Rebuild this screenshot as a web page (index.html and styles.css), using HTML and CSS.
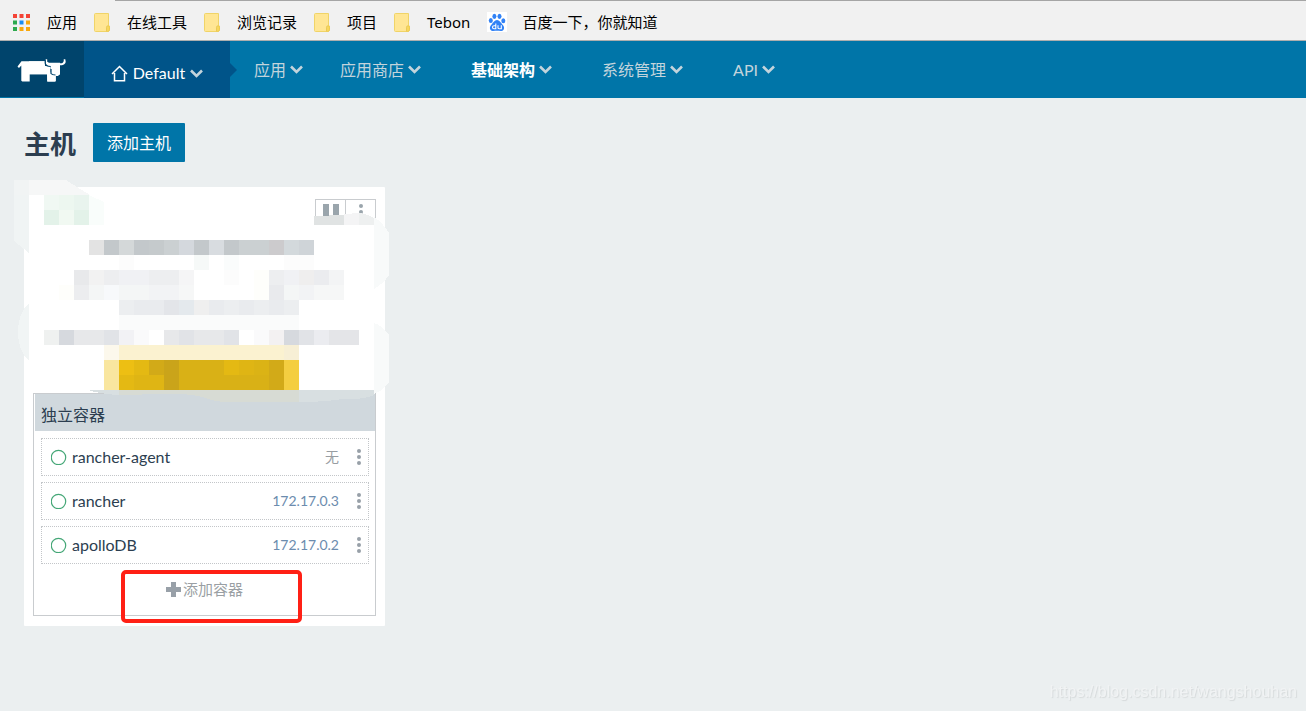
FILE: index.html
```html
<!DOCTYPE html>
<html lang="zh-CN">
<head>
<meta charset="utf-8">
<meta name="viewport" content="width=device-width, initial-scale=1">
<title>主机</title>
<link rel="stylesheet" href="styles.css">
</head>
<body>
<svg class="defs" width="0" height="0" aria-hidden="true">
  <symbol id="folder" viewBox="0 0 16 19"><path d="M1.500 .5h13v12.500h1v3.500a2 2 0 0 1-2 2h-12a1 1 0 0 1-1-1v-16a1 1 0 0 1 1-1z" fill="#ffe694" stroke="#f0d468"/><path d="M12.500 18.300v-4a1.500 1.500 0 0 1 3 0v2a2 2 0 0 1-3 2z" fill="#f9d75c" stroke="#e9ca58"/></symbol>
  <symbol id="chevron" viewBox="0 0 13 9"><path d="M1 1.500l5.500 5.500L12 1.500" fill="none" stroke="currentColor" stroke-width="2.600"/></symbol>
  <symbol id="dots" viewBox="0 0 4 16"><circle cx="2" cy="2" r="2"/><circle cx="2" cy="8" r="2"/><circle cx="2" cy="14" r="2"/></symbol>
  <symbol id="ring" viewBox="0 0 16 16"><circle cx="7.500" cy="8.500" r="7.200" fill="none" stroke="#45a777" stroke-width="1.200"/></symbol>
</svg>

<nav class="bookmarks" aria-label="书签">
  <a class="bookmark" href="#"><svg class="apps-icon" viewBox="0 0 17 17" aria-hidden="true"><g fill="#f44336"><path d="M0 0h4v4H0zM6.500 0h4v4h-4zM13 0h4v4h-4z"/></g><path d="M0 6.500h4v4H0zM0 13h4v4H0z" fill="#2da94f"/><path d="M6.500 6.500h4v4h-4z" fill="#1a8cf0"/><path d="M13 6.500h4v4h-4zM6.500 13h4v4h-4zM13 13h4v4h-4z" fill="#f9a80c"/></svg>应用</a>
  <a class="bookmark" href="#"><svg class="folder-icon" aria-hidden="true"><use href="#folder"/></svg>在线工具</a>
  <a class="bookmark" href="#"><svg class="folder-icon" aria-hidden="true"><use href="#folder"/></svg>浏览记录</a>
  <a class="bookmark" href="#"><svg class="folder-icon" aria-hidden="true"><use href="#folder"/></svg>项目</a>
  <a class="bookmark" href="#"><svg class="folder-icon" aria-hidden="true"><use href="#folder"/></svg>Tebon</a>
  <a class="bookmark bookmark-wide" href="#"><svg class="paw-icon" viewBox="0 0 20 20" aria-hidden="true"><path d="M0 0h20v20H0z" fill="#fff"/><g fill="#3182f6"><ellipse cx="3.800" cy="8.500" rx="2" ry="2.500"/><ellipse cx="7.400" cy="4.300" rx="2" ry="2.600"/><ellipse cx="12.500" cy="4.300" rx="2" ry="2.600"/><ellipse cx="16.300" cy="8.800" rx="2" ry="2.500"/><path d="M10 8c2.500 0 3.500 2.500 5.200 4.200 2 2 2.300 3.500 1.500 5.200-1.200 2.300-4 1.300-6.700 1.300s-5.500 1-6.700-1.300c-.8-1.700-.5-3.200 1.500-5.200C6.500 10.500 7.500 8 10 8z"/></g><path d="M8.800 11.500v5.300H7a1.500 1.500 0 0 1 0-3h1.800M11 13.300v2.400a1.100 1.100 0 0 0 1.100 1.100h2.200v-3.500" fill="none" stroke="#fff" stroke-width="1.100"/></svg>百度一下，你就知道</a>
</nav>

<header class="header">
  <a class="logo" href="#" aria-label="Rancher"><svg viewBox="0 0 50 26" aria-hidden="true"><path d="M4.500 5.300H28V10h5.500v5.500q1 3 5 3h4.500V10H34V18q1 1.500 4.700 2v4.700l-1 .8h-7.400l0-7.200H12.700v7.200H5.300l-1-.8V9.500L2 12 .5 10.500z" fill="#fff"/><path d="M33.500 9.500H43v8.500l-2 2H37q-2.500 0-3-2z" fill="#fff"/><path d="M12 5.300h16v5l5 .5v7.500H12z" fill="#fff"/><path d="M30 18h8.700v7.500h-8.400z" fill="#fff"/><path d="M28.700 3.300h1.500v2.500l1.800.9h11v3.500h-9.500q-4.800 0-4.800-4z" fill="#fff"/><path d="M46.700 3.300h1.600q1.500 5-3.300 6h-3V7.200h2.700q2.500-.7 2-3.900z" fill="#fff"/><path d="M28.200 4v3q0 3.500 5.500 3.500M34 13v4.500q1 1.500 4.500 1.500" fill="none" stroke="#00446c" stroke-width="1.200"/></svg></a>
  <a class="environment" href="#"><svg class="home-icon" viewBox="0 0 17 17" aria-hidden="true"><path d="M1 9l7.500-7.500L16 9M3.500 8v7.800h10V8" fill="none" stroke="currentColor" stroke-width="1.500"/></svg><span>Default</span><svg class="chevron" aria-hidden="true"><use href="#chevron"/></svg></a>
  <nav class="menu" aria-label="主菜单">
    <a class="menu-item" href="#">应用<svg class="chevron" aria-hidden="true"><use href="#chevron"/></svg></a>
    <div class="menu-group">
      <a class="menu-item" href="#">应用商店<svg class="chevron" aria-hidden="true"><use href="#chevron"/></svg></a>
      <a class="menu-item active" href="#">基础架构<svg class="chevron" aria-hidden="true"><use href="#chevron"/></svg></a>
      <a class="menu-item" href="#">系统管理<svg class="chevron" aria-hidden="true"><use href="#chevron"/></svg></a>
      <a class="menu-item" href="#">API<svg class="chevron" aria-hidden="true"><use href="#chevron"/></svg></a>
    </div>
  </nav>
</header>

<main class="page">
  <div class="page-head"><h1>主机</h1><button class="add-host" type="button">添加主机</button></div>
  <div class="hosts">
    <article class="host">
      <div class="host-summary">
        <div class="actions">
          <button type="button" aria-label="暂停"><svg class="pause-icon" viewBox="0 0 16 12" aria-hidden="true"><path d="M0 0h6v12H0zM10 0h6v12h-6z"/></svg></button>
          <button type="button" aria-label="更多"><svg class="dots" aria-hidden="true"><use href="#dots"/></svg></button>
        </div>
      </div>
      <section class="containers">
        <h2>独立容器</h2>
        <ul>
          <li><svg class="ring" aria-hidden="true"><use href="#ring"/></svg><a class="name" href="#">rancher-agent</a><span class="none">无</span><button type="button" aria-label="rancher-agent 菜单"><svg class="dots" aria-hidden="true"><use href="#dots"/></svg></button></li>
          <li><svg class="ring" aria-hidden="true"><use href="#ring"/></svg><a class="name" href="#">rancher</a><span class="ip">172.17.0.3</span><button type="button" aria-label="rancher 菜单"><svg class="dots" aria-hidden="true"><use href="#dots"/></svg></button></li>
          <li><svg class="ring" aria-hidden="true"><use href="#ring"/></svg><a class="name" href="#">apolloDB</a><span class="ip">172.17.0.2</span><button type="button" aria-label="apolloDB 菜单"><svg class="dots" aria-hidden="true"><use href="#dots"/></svg></button></li>
        </ul>
        <button class="add-container" type="button"><svg viewBox="0 0 15 15" aria-hidden="true"><path d="M5 0h5v5h5v5h-5v5H5v-5H0V5h5z"/></svg>添加容器</button>
        <span class="highlight"></span>
      </section>
      <!-- pixelated cover over the host details -->
      <svg class="mosaic" viewBox="14 180 375 225" shape-rendering="crispEdges" aria-hidden="true">
        <path d="M29 187H77L104 202V225H29z" fill="#fff"/>
        <path d="M29 180H66L77 187L90 195H29z" fill="#f6f7f7"/><path d="M14 180H29V195H14z" fill="#f1f4f4"/><path d="M14 195H29V253L14 241z" fill="#f0f4f4"/>
        <path d="M44 195h15v15h-15z" fill="#f0f8f3"/><path d="M59 195h15v15h-15z" fill="#edf7f0"/><path d="M74 195h15v15h-15z" fill="#e9f4ee"/><path d="M89 195L104 202V225H89z" fill="#f9fdfb"/><path d="M44 210h15v15h-15zM74 210h15v15h-15z" fill="#e3f2e9"/><path d="M59 210h15v15h-15z" fill="#f1f9f2"/>
        <path d="M314 216L344 215V225H314z" fill="#e0e3e3"/><path d="M344 214L359 213V225H344z" fill="#f4f4f5"/><path d="M359 213Q368 214 374 218V225H359z" fill="#eef0f0"/><path d="M314 225h60v6h-60z" fill="#fff"/><path d="M374 217Q382 222 389 233V275Q384 283 374 289z" fill="#f8fafa"/>
        <path d="M29 303Q18 313 18 332T29 361z" fill="#f1f5f5"/><path d="M374 323Q382 325 389 335V382Q384 390 374 394z" fill="#f8fafa"/>
        <g>
          <path d="M89 240h15v15h-15z" fill="#e3e3e3"/><path d="M104 240h15v15h-15zM134 240h15v15h-15zM194 240h15v15h-15zM224 240h15v15h-15z" fill="#c3c8cb"/><path d="M119 240h15v15h-15z" fill="#d4d8d9"/><path d="M149 240h15v15h-15z" fill="#c5cacc"/><path d="M164 240h15v15h-15zM239 240h30v15h-30z" fill="#cbd0d2"/><path d="M179 240h15v15h-15z" fill="#d4d8dd"/><path d="M209 240h15v15h-15z" fill="#d8dce0"/><path d="M269 240h15v15h-15z" fill="#cccbcd"/><path d="M284 240h15v15h-15z" fill="#d3d9dc"/><path d="M299 240h15v15h-15z" fill="#cfd4d8"/>
        </g>
        <path d="M119 255h15v15h-15zM284 255h30v15h-30zM224 270h15v15h-15z" fill="#fcfcfc"/><path d="M194 255h15v15h-15z" fill="#f6f9f8"/><path d="M224 255h15v15h-15z" fill="#fafcfc"/>
        <path d="M74 270h15v15h-15z" fill="#e8e9eb"/><path d="M89 270h15v15h-15z" fill="#f2f2f2"/><path d="M104 270h15v15h-15zM149 270h30v15h-30zM269 270h15v15h-15z" fill="#edeef0"/><path d="M119 270h30v15h-30zM284 270h15v15h-15z" fill="#f0f1f4"/><path d="M179 270h15v15h-15z" fill="#f5f5f6"/><path d="M299 270h15v15h-15z" fill="#efeeee"/><path d="M314 270h15v15h-15z" fill="#ebecef"/><path d="M329 270h15v15h-15z" fill="#f3f4f5"/>
        <path d="M59 285h15v15h-15zM254 270h15v30h-15z" fill="#fefefb"/><path d="M74 285h15v15h-15z" fill="#ecedef"/><path d="M89 285h15v15h-15zM119 285h30v15h-30zM284 285h15v15h-15z" fill="#f4f6f6"/><path d="M104 285h15v15h-15z" fill="#f7f9fb"/><path d="M149 285h15v15h-15zM164 285h15v15h-15zM299 285h15v15h-15z" fill="#f2f3f5"/><path d="M179 285h15v15h-15zM314 285h30v15h-30z" fill="#f6f7f7"/><path d="M269 285h15v15h-15z" fill="#e9eaed"/>
        <path d="M119 300h180v15H119z" fill="#eceef0"/><path d="M134 300h15v15h-15zM149 300h15v15h-15zM224 300h-15v15h15zM254 300h-15v15h15zM284 300h-15v15h15z" fill="#e9ebee"/><path d="M164 300h15v15h-15z" fill="#e3e5e9"/><path d="M179 300h15v15h-15z" fill="#e4e9ed"/><path d="M194 300h15v15h-15z" fill="#efefef"/><path d="M119 315h180v15H119z" fill="#fafbfb"/>
        <path d="M44 330h15v15h-15z" fill="#eff1f0"/><path d="M59 330h15v15h-15zM284 330h15v15h-15z" fill="#d6d9de"/><path d="M74 330h15v15h-15zM89 330h15v15h-15zM164 330h15v15h-15zM194 330h30v15h-30z" fill="#e7e8ea"/><path d="M104 330h15v15h-15zM179 330h15v15h-15zM299 330h15v15h-15zM224 330h15v15h-15z" fill="#e1e3e7"/><path d="M119 330h15v15h-15z" fill="#f2f2f5"/><path d="M134 330h15v15h-15zM254 330h15v15h-15z" fill="#fafafb"/><path d="M149 330h15v15h-15zM239 330h15v15h-15z" fill="#fff"/><path d="M269 330h15v15h-15z" fill="#f3f1f2"/><path d="M314 330h15v15h-15z" fill="#ebecf0"/><path d="M329 330h30v15h-30z" fill="#e4e5e8"/>
        <path d="M104 345h15v15h-15z" fill="#fcf8ec"/><path d="M119 345h180v15H119z" fill="#fbf2d0"/><path d="M284 345h15v15h-15z" fill="#f7efd5"/><path d="M104 360h15v30h-15z" fill="#f9e69f"/><path d="M119 360h165v30H119z" fill="#d9b116"/><path d="M119 360h15v15h-15z" fill="#edbf13"/><path d="M134 360h15v15h-15zM119 375h15v15h-15zM224 360h30v15h-30z" fill="#e4b913"/><path d="M134 375h30v15h-30zM239 360h30v15h-30z" fill="#dfb514"/><path d="M149 360h15v15h-15zM269 360h15v30h-15z" fill="#d2aa18"/><path d="M254 360h15v15h-15z" fill="#d4ac17"/><path d="M254 360h15v15h-15z" fill="#dbb315"/><path d="M164 360h15v30h-15z" fill="#caa41a"/><path d="M284 360h15v30h-15z" fill="#f4ce40"/>
        <path d="M88 390H374V395Q362 400 343 399Q325 402 299 402H250Q220 404 206 398Q190 393 165 394L119 395Q100 394 88 390z" fill="#d8dfe1"/><path d="M119 390H299V402H250Q220 404 206 398Q190 393 165 394L119 395z" fill="#d7dbd4"/>
      </svg>
    </article>
  </div>
</main>
<span class="watermark">https://blog.csdn.net/wangshouhan</span>
</body>
</html>
```
FILE: styles.css
```css
* { box-sizing: border-box; }

body {
  min-height: 100vh;
  margin: 0;
  background: #ebeff0;
  color: #2c3e50;
  font: 16px/24px Lato, "Noto Sans CJK SC", sans-serif;
}

a { color: inherit; text-decoration: none; }
button { margin: 0; padding: 0; border: 0; background: none; color: inherit; font: inherit; cursor: pointer; }
svg { display: block; flex: none; fill: currentColor; }
.defs { position: absolute; }

.bookmarks {
  display: flex;
  gap: 17px;
  align-items: center;
  height: 41px;
  padding: 4px 13px 0;
  border-bottom: 1px solid #aeaeae;
  background: linear-gradient(#a5a5a5, #a5a5a5) 115px 0 / 100% 1px no-repeat #f1f1f1;
  color: #000;
  font: 15px/22px "Noto Sans", "Noto Sans CJK SC", sans-serif;
  white-space: nowrap;
}
.bookmark { display: flex; gap: 17px; align-items: center; }
.bookmark-wide { gap: 15px; }
.apps-icon { width: 17px; height: 17px; }
.folder-icon { width: 16px; height: 19px; }
.paw-icon { width: 20px; height: 20px; }

.header { display: flex; height: 57px; background: #0075a8; color: #c3d4dc; white-space: nowrap; }
.logo { display: flex; align-items: center; width: 84px; padding: 0 17px; border-bottom: 1px solid #0075a8; background: #00446c; }
.logo svg { width: 50px; height: 26px; }
.environment {
  position: relative;
  display: flex;
  align-items: center;
  justify-content: center;
  gap: 5px;
  width: 146px;
  padding-top: 7px;
  background: #005489;
  color: #fff;
}
.environment::after {
  content: "";
  position: absolute;
  top: 22px;
  left: 100%;
  border: 7px solid transparent;
  border-left-color: #005489;
  border-right: 0;
}
.home-icon { width: 17px; height: 17px; }
.chevron { width: 13px; height: 9px; color: #c3d4dc; }
.menu { display: flex; gap: 37px; align-items: center; padding: 0 24px; }
.menu-group { display: flex; gap: 50px; }
.menu-item { display: flex; gap: 4px; align-items: center; }
.active { color: #fff; font-weight: 700; }

.page { padding: 25px 24px; }
.page-head { display: flex; gap: 17px; align-items: center; margin-bottom: 25px; }
h1 { margin: 0; padding-top: 4px; font-size: 26px; line-height: 35px; font-weight: 700; }
.add-host { height: 39px; padding: 0 14px; border-radius: 1px; background: #0075a8; color: #fff; }

.hosts { display: grid; grid-template-columns: repeat(auto-fill, 361px); gap: 20px; }
.host { position: relative; padding: 0 9px 10px; border-radius: 1px; background: #fff; }
.host-summary { min-height: 206px; padding-top: 12px; }
.actions { display: flex; justify-content: flex-end; color: #9aa5ac; }
.actions button { display: flex; justify-content: center; width: 31px; height: 26px; padding-top: 4px; border: 1px solid #c9cccf; }
.actions button:first-child { width: 30px; border-right: 0; }
.pause-icon { width: 16px; height: 12px; }
.dots { width: 4px; height: 16px; }
.mosaic { position: absolute; top: -7px; left: -10px; width: 375px; height: 225px; pointer-events: none; }

.containers { position: relative; border: 1px solid #c9cccf; }
h2 { margin: 0 0 0 1px; padding: 9px 6px 4px; background: #d0d8dd; font-size: 16px; line-height: 24px; font-weight: 400; }
.containers ul { display: grid; gap: 6px; margin: 0; padding: 7px 6px 0 7px; list-style: none; }
.containers li { display: flex; align-items: center; height: 38px; padding: 0 7px 0 9px; border: 1px dotted #c3c6c9; }
.ring { width: 16px; height: 16px; }
.name { flex: 1; padding-left: 5px; }
.ip, .none { margin-right: 18px; font-size: 14px; color: #6c8cae; }
.none { color: #989da2; }
.containers li button { color: #98a0a8; }
.add-container { display: flex; gap: 2px; justify-content: center; width: 100%; height: 51px; padding-top: 13px; color: #9a9fa4; font-size: 15px; }
.add-container svg { width: 15px; height: 15px; margin-top: 5px; color: #98a0a8; }
.highlight { position: absolute; bottom: -8px; left: 87px; width: 181px; height: 53px; border: 4px solid #ff2015; border-radius: 5px; pointer-events: none; }

.watermark { position: fixed; right: 9px; bottom: 9px; color: #f1f3f4; font: 16px/20px "Liberation Sans", sans-serif; text-shadow: 1px 1px 1px #d6dadb; }
```
